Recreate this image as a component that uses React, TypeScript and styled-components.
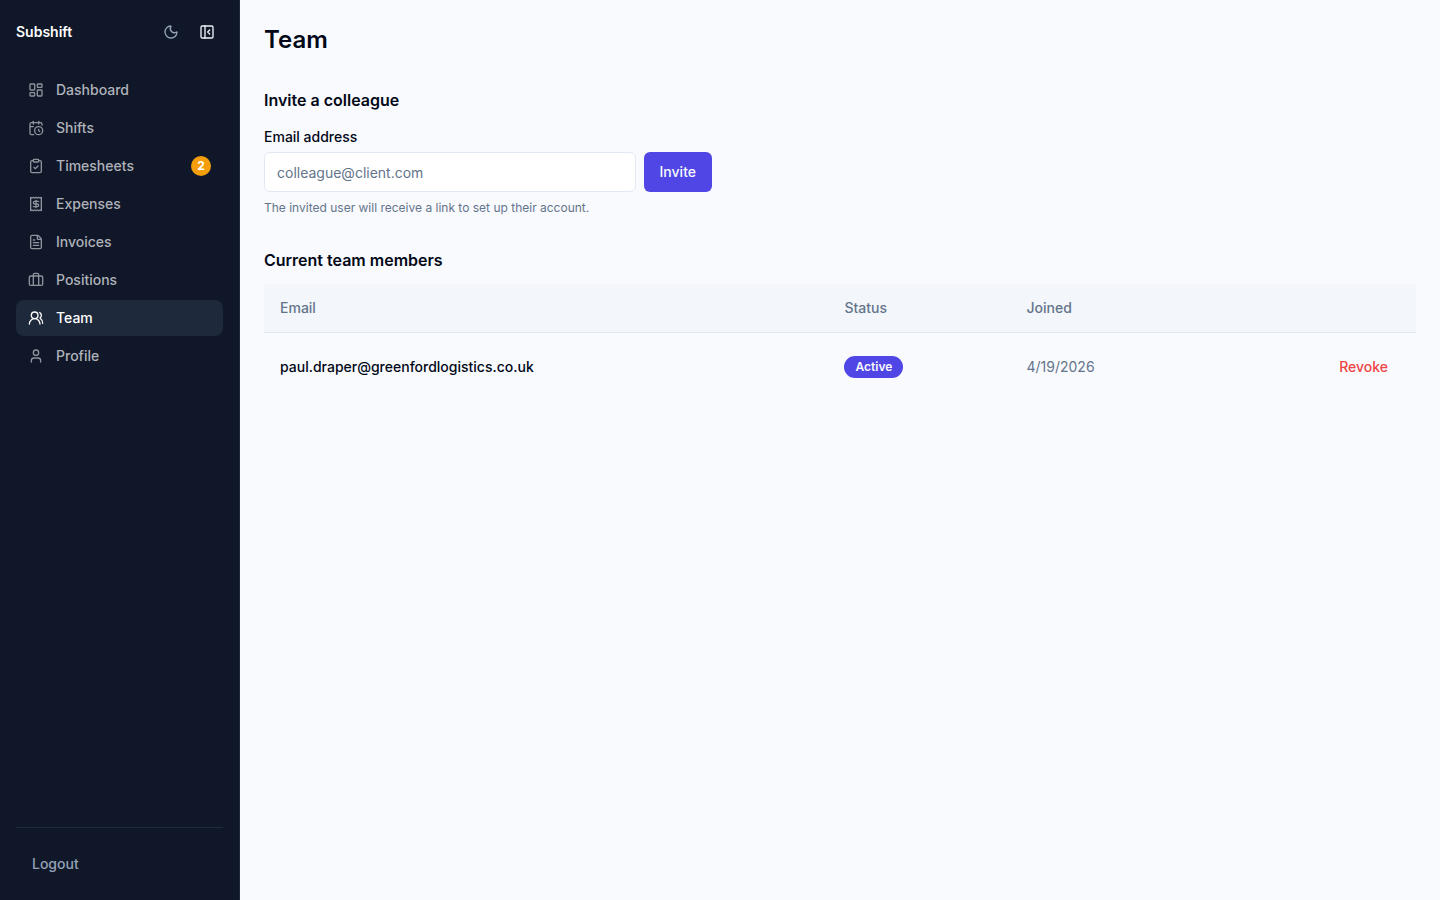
import React from "react";
import styled, { createGlobalStyle } from "styled-components";
import {
  Briefcase, CalendarClock, ClipboardCheck, FileText, LayoutDashboard, Moon,
  PanelLeftClose, Receipt, User, UsersRound, type LucideIcon,
} from "lucide-react";

const GlobalStyle = createGlobalStyle`
  *, *::before, *::after { box-sizing: border-box; }
  body {
    margin: 0;
    background: #f8fafe;
    color: #020817;
    font-family: Inter, "Liberation Sans", sans-serif;
    font-size: 14px;
    line-height: 20px;
  }
  h1, h2, p { margin: 0; }
  button, input { font: inherit; }
`;

const Shell = styled.div`
  display: flex;
  min-height: 100vh;
`;

const Sidebar = styled.aside`
  display: flex;
  flex-direction: column;
  flex: 0 0 240px;
  padding: 16px;
  background: #0f1729;
  border-right: 1px solid #1e293b;
`;

const SidebarHeader = styled.header`
  display: flex;
  align-items: center;
  justify-content: space-between;
  margin-bottom: 24px;
`;

const Brand = styled.span`
  color: #fff;
  font-weight: 600;
`;

const HeaderActions = styled.div`
  display: flex;
  gap: 4px;
`;

const IconButton = styled.button<{ $tone: string }>`
  display: grid;
  place-items: center;
  width: 32px;
  height: 32px;
  padding: 0;
  border: 0;
  border-radius: 6px;
  background: transparent;
  color: ${(p) => p.$tone};
  cursor: pointer;
`;

const NavList = styled.nav`
  display: flex;
  flex-direction: column;
  gap: 2px;
`;

const NavLink = styled.a<{ $active: boolean }>`
  display: flex;
  align-items: center;
  gap: 12px;
  height: 36px;
  padding: 0 12px;
  border-radius: 8px;
  background: ${(p) => (p.$active ? "#1e293b" : "transparent")};
  color: ${(p) => (p.$active ? "#fff" : "#afb2b9")};
  font-weight: 500;
  text-decoration: none;

  svg { opacity: ${(p) => (p.$active ? 1 : 0.8)}; }
`;

const Count = styled.span`
  display: grid;
  place-items: center;
  min-width: 20px;
  height: 20px;
  margin-left: auto;
  border-radius: 10px;
  background: #f59e0b;
  color: #fff;
  font-size: 12px;
  font-weight: 700;
`;

const SidebarFooter = styled.footer`
  margin-top: auto;
  padding-top: 16px;
  border-top: 1px solid #1e293b;
`;

const LogoutButton = styled.button`
  display: block;
  width: 100%;
  height: 40px;
  padding: 0 16px;
  border: 0;
  background: transparent;
  color: #94a3b8;
  font-weight: 500;
  text-align: left;
  cursor: pointer;
`;

const Main = styled.main`
  display: flex;
  flex: 1;
  flex-direction: column;
  gap: 32px;
  min-width: 0;
  padding: 24px;
`;

const PageTitle = styled.h1`
  font-size: 24px;
  font-weight: 600;
  line-height: 32px;
`;

const Section = styled.section<{ $gap: number }>`
  display: flex;
  flex-direction: column;
  gap: ${(p) => p.$gap}px;
`;

const SectionTitle = styled.h2`
  font-size: 16px;
  font-weight: 600;
  line-height: 24px;
`;

const InviteForm = styled.form`
  display: flex;
  flex-direction: column;
  gap: 8px;
  max-width: 448px;
`;

const Field = styled.div`
  display: flex;
  flex-direction: column;
  gap: 6px;
`;

const Label = styled.label`
  font-weight: 500;
  line-height: 18px;
`;

const FieldRow = styled.div`
  display: flex;
  gap: 8px;
`;

const EmailInput = styled.input`
  flex: 1;
  min-width: 0;
  height: 40px;
  padding: 0 12px;
  border: 1px solid #e2e8f0;
  border-radius: 6px;
  background: #fff;
  color: inherit;

  &::placeholder { color: #64748b; opacity: 1; }
`;

const InviteButton = styled.button`
  height: 40px;
  padding: 0 16px;
  border: 0;
  border-radius: 6px;
  background: #4f46e5;
  color: #f8fafc;
  font-weight: 500;
  cursor: pointer;
`;

const Hint = styled.p`
  color: #64748b;
  font-size: 12px;
  line-height: 16px;
`;

const MembersTable = styled.table`
  width: 100%;
  border-collapse: collapse;
  table-layout: fixed;
`;

const HeadCell = styled.th<{ $width: string }>`
  width: ${(p) => p.$width};
  height: 48px;
  padding: 0 16px;
  border-bottom: 1px solid #e2e8f0;
  background: #f3f7fb;
  color: #64748b;
  font-weight: 500;
  text-align: left;
`;

const Cell = styled.td<{ $muted?: boolean; $strong?: boolean; $end?: boolean }>`
  height: 68px;
  padding: 16px;
  color: ${(p) => (p.$muted ? "#64748b" : "inherit")};
  font-weight: ${(p) => (p.$strong ? 500 : 400)};
  text-align: ${(p) => (p.$end ? "right" : "left")};
`;

const StatusBadge = styled.span`
  display: inline-flex;
  padding: 3px 11px;
  border-radius: 11px;
  background: #4f46e5;
  color: #f8fafc;
  font-size: 12px;
  font-weight: 600;
  line-height: 16px;
  vertical-align: middle;
`;

const RevokeButton = styled.button`
  height: 36px;
  padding: 0 12px;
  border: 0;
  background: transparent;
  color: #ef4444;
  font-weight: 500;
  cursor: pointer;
`;

type NavItem = { label: string; icon: LucideIcon; count?: number };

const navItems: NavItem[] = [
  { label: "Dashboard", icon: LayoutDashboard },
  { label: "Shifts", icon: CalendarClock },
  { label: "Timesheets", icon: ClipboardCheck, count: 2 },
  { label: "Expenses", icon: Receipt },
  { label: "Invoices", icon: FileText },
  { label: "Positions", icon: Briefcase },
  { label: "Team", icon: UsersRound },
  { label: "Profile", icon: User },
];

const members = [
  { email: "paul.draper@greenfordlogistics.co.uk", status: "Active", joined: "4/19/2026" },
];

export default function App() {
  return (
    <>
      <GlobalStyle />
      <Shell>
        <Sidebar>
          <SidebarHeader>
            <Brand>Subshift</Brand>
            <HeaderActions>
              <IconButton type="button" aria-label="Toggle theme" $tone="#94a3b8">
                <Moon size={16} />
              </IconButton>
              <IconButton type="button" aria-label="Collapse sidebar" $tone="#f1f5f9">
                <PanelLeftClose size={16} />
              </IconButton>
            </HeaderActions>
          </SidebarHeader>
          <NavList aria-label="Main">
            {navItems.map(({ label, icon: Icon, count }) => (
              <NavLink key={label} href={`#${label.toLowerCase()}`} $active={label === "Team"}>
                <Icon size={16} />
                {label}
                {count !== undefined && <Count>{count}</Count>}
              </NavLink>
            ))}
          </NavList>
          <SidebarFooter>
            <LogoutButton type="button">Logout</LogoutButton>
          </SidebarFooter>
        </Sidebar>
        <Main>
          <PageTitle>Team</PageTitle>
          <Section $gap={16}>
            <SectionTitle>Invite a colleague</SectionTitle>
            <InviteForm onSubmit={(e: React.FormEvent) => e.preventDefault()}>
              <Field>
                <Label htmlFor="invite-email">Email address</Label>
                <FieldRow>
                  <EmailInput id="invite-email" type="email" placeholder="colleague@client.com" />
                  <InviteButton type="submit">Invite</InviteButton>
                </FieldRow>
              </Field>
              <Hint>The invited user will receive a link to set up their account.</Hint>
            </InviteForm>
          </Section>
          <Section $gap={12}>
            <SectionTitle>Current team members</SectionTitle>
            <MembersTable>
              <thead>
                <tr>
                  <HeadCell scope="col" $width="49%">Email</HeadCell>
                  <HeadCell scope="col" $width="15.8%">Status</HeadCell>
                  <HeadCell scope="col" $width="19%">Joined</HeadCell>
                  <HeadCell scope="col" $width="16.2%" aria-label="Actions" />
                </tr>
              </thead>
              <tbody>
                {members.map((m) => (
                  <tr key={m.email}>
                    <Cell $strong>{m.email}</Cell>
                    <Cell><StatusBadge>{m.status}</StatusBadge></Cell>
                    <Cell $muted>{m.joined}</Cell>
                    <Cell $end><RevokeButton type="button">Revoke</RevokeButton></Cell>
                  </tr>
                ))}
              </tbody>
            </MembersTable>
          </Section>
        </Main>
      </Shell>
    </>
  );
}
